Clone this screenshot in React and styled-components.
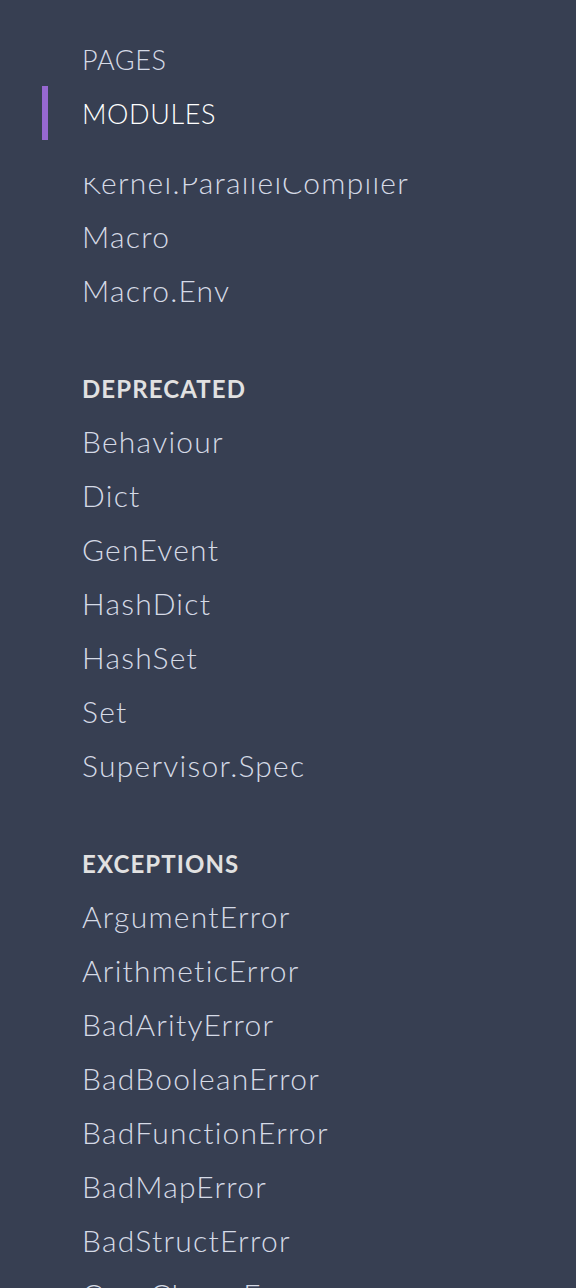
import React from "react";
import styled, { createGlobalStyle } from "styled-components";

const Global = createGlobalStyle`
  html, body {
    margin: 0;
    padding: 0;
    background: #373f52;
    overflow: hidden;
  }
  * { box-sizing: border-box; }
`;

const Sidebar = styled.nav`
  height: 1288px;
  width: 576px;
  background: #373f52;
  display: flex;
  flex-direction: column;
  font-family: Lato, "Open Sans", sans-serif;
  font-variant-ligatures: none;
  overflow: hidden;
`;

const Tabs = styled.ul`
  list-style: none;
  margin: 0;
  padding: 32px 0 0 42px;
  display: flex;
  flex-direction: column;
`;

const Tab = styled.li`
  height: 54px;
  padding-top: 2px;
  line-height: 52px;
  font-size: 27px;
  font-weight: 300;
  letter-spacing: 0.6px;
  text-transform: uppercase;
  padding-left: 34px;
  border-left: 6px solid ${(p) => (p.$active ? "#9768d1" : "transparent")};
  color: ${(p) => (p.$active ? "#ffffff" : "#d5dae6")};
`;

const ListViewport = styled.div`
  margin-top: 38px;
  flex: 1;
  overflow: hidden;
`;

const FullList = styled.ul`
  list-style: none;
  margin: -23px 0 0 0;
  padding: 0 0 0 82px;
`;

const Item = styled.li`
  height: 54px;
  line-height: 54px;
  font-size: 30px;
  font-weight: 300;
  letter-spacing: 1.25px;
  color: #d5dae6;
  white-space: nowrap;
`;

const Group = styled.li`
  margin-top: 47px;
  height: 50px;
  line-height: 50px;
  font-size: 24px;
  font-weight: 700;
  letter-spacing: 1.1px;
  text-transform: uppercase;
  color: #e1e1e1;
`;

const groups = [
  { name: null, items: ["Kernel.ParallelCompiler", "Macro", "Macro.Env"] },
  {
    name: "Deprecated",
    items: ["Behaviour", "Dict", "GenEvent", "HashDict", "HashSet", "Set", "Supervisor.Spec"],
  },
  {
    name: "Exceptions",
    items: [
      "ArgumentError",
      "ArithmeticError",
      "BadArityError",
      "BadBooleanError",
      "BadFunctionError",
      "BadMapError",
      "BadStructError",
      "CaseClauseError",
    ],
  },
];

export default function App() {
  return (
    <>
      <Global />
      <Sidebar>
        <Tabs>
          <Tab>Pages</Tab>
          <Tab $active>Modules</Tab>
        </Tabs>
        <ListViewport>
          <FullList>
            {groups.map((g, gi) => (
              <React.Fragment key={gi}>
                {g.name && <Group>{g.name}</Group>}
                {g.items.map((it) => (
                  <Item key={it}>{it}</Item>
                ))}
              </React.Fragment>
            ))}
          </FullList>
        </ListViewport>
      </Sidebar>
    </>
  );
}
